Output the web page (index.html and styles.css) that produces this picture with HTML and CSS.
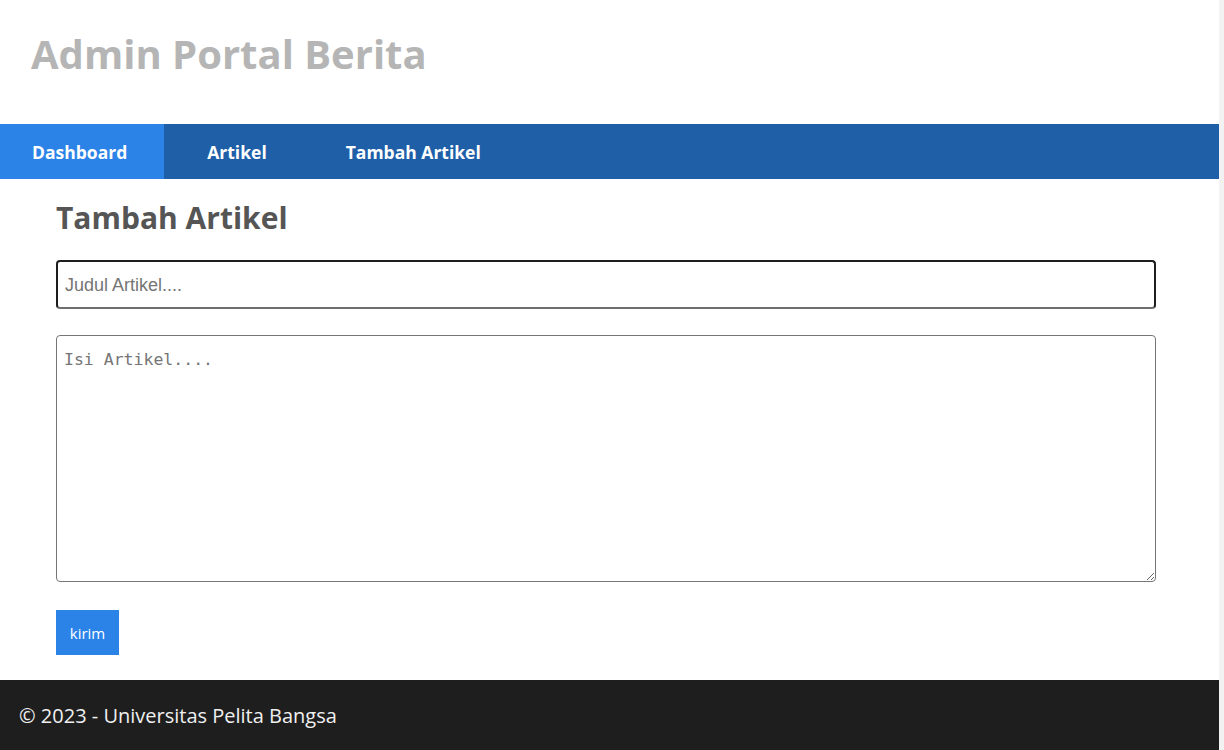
FILE: index.html
```html
<!DOCTYPE html>
<html lang="id">
<head>
<meta charset="utf-8">
<title>Admin Portal Berita</title>
<link rel="stylesheet" href="styles.css">
</head>
<body>
<div class="page">
  <header class="site-header">
    <h1 class="brand">Admin Portal Berita</h1>
  </header>
  <nav class="main-nav">
    <a class="nav-item active" href="#">Dashboard</a>
    <a class="nav-item" href="#">Artikel</a>
    <a class="nav-item" href="#">Tambah Artikel</a>
  </nav>
  <main class="content">
    <h2 class="page-title">Tambah Artikel</h2>
    <form class="article-form">
      <input class="field-title" type="text" placeholder="Judul Artikel....">
      <textarea class="field-body" placeholder="Isi Artikel...."></textarea>
      <button class="btn-submit" type="button">kirim</button>
    </form>
  </main>
  <footer class="site-footer">© 2023 - Universitas Pelita Bangsa</footer>
</div>
</body>
</html>
```

FILE: styles.css
```css
html {
  background: linear-gradient(to right, #e6e6e6, #f2f2f2);
  height: 100%;
}
body {
  margin: 0;
  height: 100%;
  font-family: "Open Sans", "Liberation Sans", sans-serif;
}
.page {
  width: 1219px;
  min-height: 100%;
  background: #fff;
  display: flex;
  flex-direction: column;
}
.site-header {
  height: 124px;
  display: flex;
  align-items: flex-start;
}
.brand {
  margin: 27px 0 0 31px;
  font-size: 40px;
  font-weight: 700;
  color: #b5b5b5;
  line-height: 54px;
}
.main-nav {
  display: flex;
  height: 55px;
  background: #1f5fa8;
}
.nav-item {
  display: flex;
  align-items: center;
  padding: 0 40px 0 43px;
  color: #fff;
  font-weight: 700;
  font-size: 17.5px;
  text-decoration: none;
}
.nav-item:last-child {
  padding-left: 39px;
}
.nav-item.active {
  background: #2b83e8;
  padding: 0 37px 0 32px;
}
.content {
  padding: 18px 0 25px 56px;
}
.page-title {
  margin: 0 0 21px;
  font-size: 30px;
  font-weight: 700;
  color: #555;
  line-height: 42px;
}
.article-form {
  display: flex;
  flex-direction: column;
  align-items: flex-start;
}
.field-title {
  box-sizing: border-box;
  width: 1100px;
  height: 49px;
  border: 2px solid #1e1e1e;
  border-bottom-color: #6e6e6e;
  border-radius: 4px;
  padding: 1px 7px 0;
  font-family: "Liberation Sans", Arial, sans-serif;
  font-size: 18px;
  color: #222;
  outline: none;
}
.field-title::placeholder {
  color: #757575;
}
.field-body {
  box-sizing: border-box;
  width: 1100px;
  height: 247px;
  margin-top: 26px;
  border: 1px solid #767676;
  border-radius: 4px;
  padding: 14px 7px 13px;
  font-family: "DejaVu Sans Mono", "Liberation Mono", monospace;
  font-size: 16.5px;
  line-height: 20px;
  resize: vertical;
  outline: none;
}
.field-body::placeholder {
  color: #757575;
}
.btn-submit {
  margin-top: 28px;
  width: 63px;
  height: 45px;
  border: none;
  background: #2b83e8;
  color: #fff;
  font-family: "Open Sans", "Liberation Sans", sans-serif;
  font-size: 15px;
  padding: 0;
}
.site-footer {
  margin-top: auto;
  height: 70px;
  box-sizing: border-box;
  background: #1e1e1e;
  color: #f0f0f0;
  font-size: 20px;
  padding: 0 19px;
  display: flex;
  align-items: center;
}
```
